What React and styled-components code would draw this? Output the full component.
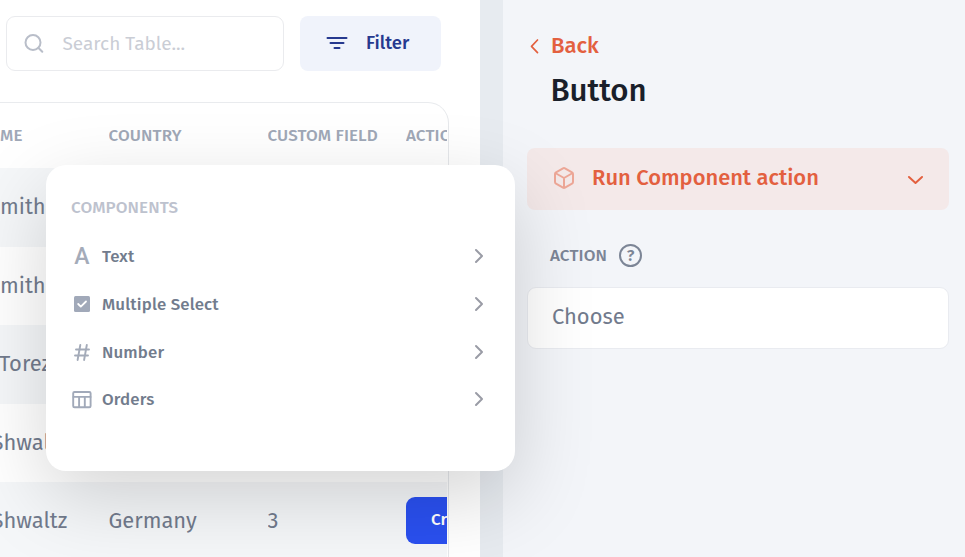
import React from "react";
import styled, { createGlobalStyle } from "styled-components";

const Global = createGlobalStyle`
  * { box-sizing: border-box; }
  body { margin: 0; overflow: hidden; font-family: "Fira Sans", "Noto Sans", sans-serif; }
`;

const Text = styled.span`
  display: block;
  white-space: pre;
  font-size: ${(p) => p.$size}px;
  line-height: ${(p) => p.$line || 28}px;
  font-weight: ${(p) => p.$weight || 400};
  color: ${(p) => p.$color};
  letter-spacing: ${(p) => p.$track || 0}px;
`;

const Icon = styled.svg`
  display: block;
  flex: none;
  fill: none;
  stroke: ${(p) => p.$color};
  stroke-width: ${(p) => p.$weight || 2};
  stroke-linecap: round;
  stroke-linejoin: round;
`;

const Page = styled.div`
  position: relative;
  display: flex;
  width: 965px;
  height: 557px;
  overflow: hidden;
`;

const TablePane = styled.section`
  width: 480px;
  background: #fff;
  overflow: hidden;
`;

const Divider = styled.div`
  width: 23px;
  background: #e7ebf0;
`;

const Toolbar = styled.div`
  display: flex;
  gap: 16px;
  padding: 16px 0 0 6px;
  height: 102px;
`;

const SearchBox = styled.div`
  display: flex;
  align-items: center;
  gap: 18.5px;
  width: 278px;
  height: 55px;
  padding: 0 0 0 17px;
  border: 1px solid #eaebee;
  border-radius: 9px;
`;

const FilterButton = styled.div`
  display: flex;
  align-items: center;
  gap: 18px;
  width: 141px;
  height: 55px;
  padding: 0 0 2px 26px;
  border-radius: 8px;
  background: #f0f3fb;
`;

const Table = styled.div`
  width: 449px;
  height: 470px;
  border-top: 1px solid #e9ebee;
  border-right: 1px solid #e6e8eb;
  border-top-right-radius: 21px;
  padding-right: 1px;
`;

const Row = styled.div`
  display: grid;
  grid-template-columns: 108.5px 159px 138.5px 41px;
  align-items: center;
  height: ${(p) => p.$height || 78.5}px;
  background: ${(p) => (p.$shaded ? "#f5f7f9" : "transparent")};
`;

const Cell = styled.div`
  min-width: 0;
  overflow: hidden;
`;

const NameShift = styled.div`
  margin-left: ${(p) => p.$x}px;
`;

const CreateButton = styled.div`
  width: 90px;
  height: 47px;
  margin-bottom: 2px;
  padding: 9px 0 0 25px;
  border-radius: 9px;
  background: #2a50f0;
`;

const Panel = styled.aside`
  width: 462px;
  background: #f3f5f9;
  padding: 32px 16px 0 24px;
`;

const Back = styled.div`
  display: flex;
  align-items: center;
  gap: 11px;
  height: 28px;
  padding-left: 2px;
`;

const Heading = styled.div`
  padding: 11px 0 0 23.4px;
  height: 88px;
`;

const ActionSelect = styled.div`
  display: flex;
  align-items: center;
  gap: 16px;
  height: 62px;
  padding: 0 25px 2px 25px;
  border-radius: 8px;
  background: #f4e9e9;
`;

const Grow = styled.div`
  flex: 1;
`;

const Field = styled.div`
  display: flex;
  align-items: center;
  gap: 12px;
  height: 77px;
  padding: 14px 0 0 23px;
`;

const HelpIcon = styled.div`
  display: grid;
  place-items: center;
  width: 23px;
  height: 23px;
  border: 2px solid #7c8596;
  border-radius: 50%;
`;

const Input = styled.div`
  height: 62px;
  padding: 15px 24px;
  border: 1px solid #e9ebf0;
  border-radius: 9px;
  background: #fff;
`;

const Popover = styled.div`
  position: absolute;
  left: 46px;
  top: 165px;
  width: 469px;
  height: 306px;
  padding: 29px 29px 0 25px;
  border-radius: 20px;
  background: #fff;
  box-shadow: 0 26px 80px rgba(0, 0, 0, 0.17);
`;

const Menu = styled.div`
  padding-top: 10.4px;
`;

const MenuItem = styled.div`
  display: flex;
  align-items: center;
  gap: 9px;
  height: 47.7px;
`;

const IconSlot = styled.div`
  display: grid;
  place-items: center;
  width: 22px;
  height: 24px;
`;

const Letter = styled(Text)`
  font-family: Roboto, sans-serif;
`;

const rows = [
  { name: "mith", x: 0 },
  { name: "mith", x: 0 },
  { name: "Torez", x: -1 },
  { name: "Shwaltz", x: -8.5 },
  { name: "Shwaltz", x: -8.5, country: "Germany", custom: "3", action: "Create" },
];

const LetterIcon = () => (
  <Letter $size={23} $line={26} $weight={500} $color="#a4abb9">A</Letter>
);

const CheckIcon = () => (
  <Icon width="22" height="24" $color="#fff" $weight={1.8}>
    <rect x="3" y="4" width="16" height="16" rx="1.5" fill="#a1a9b9" stroke="none" />
    <path d="M7.2 12l2.6 2.6L15 9.5" />
  </Icon>
);

const HashIcon = () => (
  <Icon width="22" height="24" $color="#a4abb9" $weight={1.9}>
    <path d="M9.3 5L6.6 20M15.8 5l-2.7 15M5 9.5h13M4 15.5h13" />
  </Icon>
);

const TableIcon = () => (
  <Icon width="22" height="24" $color="#a1a9b9" $weight={1.9}>
    <rect x="2.2" y="5" width="17.4" height="15.2" rx="1.3" />
    <path d="M2.5 9.9h17M8.1 9.9v10M13.8 9.9v10" />
  </Icon>
);

const items = [
  { label: "Text", icon: LetterIcon },
  { label: "Multiple Select", icon: CheckIcon },
  { label: "Number", icon: HashIcon },
  { label: "Orders", icon: TableIcon },
];

const Head = ({ children }) => (
  <Text $size={17} $weight={500} $track={0.1} $color="#a0a8b7">{children}</Text>
);
const Body = ({ children }) => (
  <Text $size={21.9} $color="#727b8d">{children}</Text>
);

export default function App() {
  return (
    <Page>
      <Global />
      <TablePane>
        <Toolbar>
          <SearchBox>
            <Icon width="20" height="20" $color="#b9bec9">
              <circle cx="9" cy="8.5" r="7.5" />
              <path d="M14.5 14l3.8 3.8" />
            </Icon>
            <Text $size={19} $color="#cacdd5">Search Table...</Text>
          </SearchBox>
          <FilterButton>
            <Icon width="22" height="14" $color="#26398f">
              <path d="M1.5 2h19M4.5 7h13M8.5 12h5" />
            </Icon>
            <Text $size={18.5} $weight={500} $color="#26398f">Filter</Text>
          </FilterButton>
        </Toolbar>
        <Table>
          <Row $height={65}>
            <Cell><Head>ME</Head></Cell>
            <Cell><Head>COUNTRY</Head></Cell>
            <Cell><Head>CUSTOM FIELD</Head></Cell>
            <Cell><Head>ACTION</Head></Cell>
          </Row>
          {rows.map((r, i) => (
            <Row key={i} $shaded={i % 2 === 0}>
              <Cell><NameShift $x={r.x}><Body>{r.name}</Body></NameShift></Cell>
              <Cell><Body>{r.country}</Body></Cell>
              <Cell><Body>{r.custom}</Body></Cell>
              <Cell>
                {r.action && (
                  <CreateButton>
                    <Text $size={17} $weight={500} $color="#fff">{r.action}</Text>
                  </CreateButton>
                )}
              </Cell>
            </Row>
          ))}
        </Table>
      </TablePane>
      <Divider />
      <Panel>
        <Back>
          <Icon width="11" height="16" $color="#e3603f" $weight={1.7}>
            <path d="M8.5 2L2.5 8.3L8.5 14.6" />
          </Icon>
          <Text $size={22} $weight={500} $color="#e3603f">Back</Text>
        </Back>
        <Heading>
          <Text $size={31.2} $line={40} $weight={500} $color="#1a1f2a">Button</Text>
        </Heading>
        <ActionSelect>
          <Icon width="24" height="24" viewBox="0 0 24 24" $color="#eda797">
            <path d="M21 16V8a2 2 0 0 0-1-1.73l-7-4a2 2 0 0 0-2 0l-7 4A2 2 0 0 0 3 8v8a2 2 0 0 0 1 1.73l7 4a2 2 0 0 0 2 0l7-4A2 2 0 0 0 21 16zM3.3 7L12 12l8.7-5M12 22V12" />
          </Icon>
          <Text $size={21.9} $weight={500} $color="#e3603f">Run Component action</Text>
          <Grow />
          <Icon width="17" height="12" $color="#e3603f">
            <path d="M2 5l6.5 6L15 5" />
          </Icon>
        </ActionSelect>
        <Field>
          <Text $size={17} $weight={500} $track={0.1} $color="#7c8596">ACTION</Text>
          <HelpIcon><Text $size={16} $line={18} $weight={600} $color="#7c8596">?</Text></HelpIcon>
        </Field>
        <Input><Body>Choose</Body></Input>
      </Panel>
      <Popover>
        <Text $size={17} $weight={500} $track={0.1} $color="#bdc2ce">COMPONENTS</Text>
        <Menu>
          {items.map(({ label, icon: Glyph }) => (
            <MenuItem key={label}>
              <IconSlot><Glyph /></IconSlot>
              <Text $size={16.9} $weight={500} $track={0.13} $color="#727c8d">{label}</Text>
              <Grow />
              <Icon width="14" height="18" $color="#9a9ca6">
                <path d="M4 3l6 6L4 15" />
              </Icon>
            </MenuItem>
          ))}
        </Menu>
      </Popover>
    </Page>
  );
}
